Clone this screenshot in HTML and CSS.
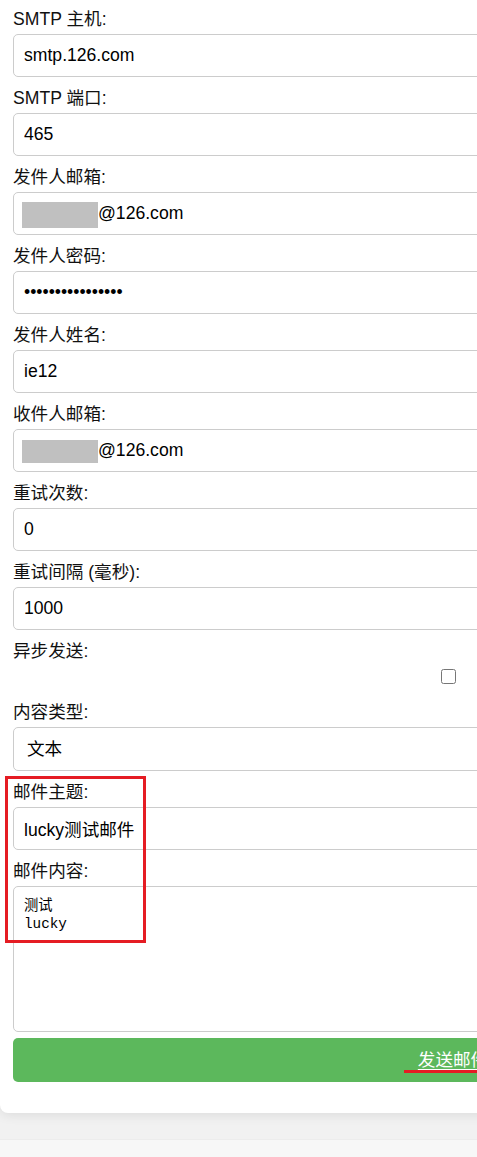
FILE: index.html
```html
<!DOCTYPE html>
<html lang="zh-CN">
<head>
<meta charset="utf-8">
<title>邮件发送</title>
<link rel="stylesheet" href="styles.css">
</head>
<body>
<div class="viewport">
  <div class="card">
    <form class="form">
      <div class="field">
        <label class="label">SMTP 主机:</label>
        <input class="input" type="text" value="smtp.126.com">
      </div>
      <div class="field">
        <label class="label">SMTP 端口:</label>
        <input class="input" type="text" value="465">
      </div>
      <div class="field">
        <label class="label">发件人邮箱:</label>
        <div class="redact-wrap">
          <input class="input input-redacted" type="text" value="@126.com">
          <span class="redact redact-a"></span>
        </div>
      </div>
      <div class="field">
        <label class="label">发件人密码:</label>
        <input class="input" type="password" value="abcdefghijklmnop">
      </div>
      <div class="field">
        <label class="label">发件人姓名:</label>
        <input class="input" type="text" value="ie12">
      </div>
      <div class="field">
        <label class="label">收件人邮箱:</label>
        <div class="redact-wrap">
          <input class="input input-redacted" type="text" value="@126.com">
          <span class="redact redact-b"></span>
        </div>
      </div>
      <div class="field">
        <label class="label">重试次数:</label>
        <input class="input" type="text" value="0">
      </div>
      <div class="field">
        <label class="label">重试间隔 (毫秒):</label>
        <input class="input" type="text" value="1000">
      </div>
      <div class="field">
        <label class="label">异步发送:</label>
        <div class="check-row"><input class="check" type="checkbox"></div>
      </div>
      <div class="field">
        <label class="label">内容类型:</label>
        <select class="input select">
          <option>文本</option>
        </select>
      </div>
      <div class="field">
        <label class="label">邮件主题:</label>
        <input class="input" type="text" value="lucky测试邮件">
      </div>
      <div class="field field-last">
        <label class="label">邮件内容:</label>
        <textarea class="textarea">测试
lucky</textarea>
      </div>
      <button class="button" type="button"><span class="button-text">发送邮件</span></button>
    </form>
  </div>
  <div class="footer"></div>
  <div class="annot-box"></div>
  <div class="annot-line"></div>
</div>
</body>
</html>
```

FILE: styles.css
```css
html, body {
  margin: 0;
  padding: 0;
}

body {
  background: #f1f1f1;
  font-family: "Liberation Sans", Arial, "Noto Sans CJK SC", sans-serif;
  color: #111;
}

.viewport {
  position: relative;
  width: 477px;
  height: 1157px;
  overflow: hidden;
}

.card {
  width: 910px;
  box-sizing: border-box;
  background: #fff;
  padding: 9px 13px 31px 13px;
  border-radius: 0 0 8px 8px;
  box-shadow: 0 2px 12px rgba(0, 0, 0, 0.09);
  margin-bottom: 26px;
}

.form {
  display: flex;
  flex-direction: column;
  width: 880px;
}

.field {
  display: flex;
  flex-direction: column;
  margin-bottom: 11px;
}

.field-last {
  margin-bottom: 6px;
}

.label {
  display: block;
  font-size: 17.6px;
  line-height: 20px;
  margin-bottom: 5px;
  color: #111;
}

.input {
  display: block;
  width: 100%;
  height: 43px;
  box-sizing: border-box;
  margin: 0;
  padding: 0 10px;
  border: 1px solid #cccccc;
  border-radius: 5px;
  background: #fff;
  font-family: "Liberation Sans", Arial, "Noto Sans CJK SC", sans-serif;
  font-size: 17.6px;
  color: #000;
  outline: none;
}

.select {
  height: 44px;
  padding: 0 10px 0 13px;
  appearance: none;
  -webkit-appearance: none;
  background: #fff;
  font-size: 17.6px;
}

.redact-wrap {
  position: relative;
}

.input-redacted {
  padding-left: 84px;
}

.redact {
  position: absolute;
  left: 9px;
  width: 76px;
  background: #c0c0c0;
}

.redact-a {
  top: 10px;
  height: 26px;
}

.redact-b {
  top: 11px;
  height: 23px;
}

.check-row {
  display: flex;
  justify-content: center;
  align-items: flex-start;
  width: 870px;
  height: 25px;
  padding-top: 3px;
  box-sizing: border-box;
}

.check {
  width: 15px;
  height: 15px;
  margin: 0;
}

.textarea {
  display: block;
  width: 100%;
  height: 146px;
  box-sizing: border-box;
  margin: 0;
  padding: 10px;
  border: 1px solid #cccccc;
  border-radius: 5px;
  font-family: "Liberation Mono", "Noto Sans CJK SC", monospace;
  font-size: 14.3px;
  line-height: 18px;
  color: #000;
  resize: none;
  outline: none;
}

.button {
  display: flex;
  align-items: center;
  justify-content: center;
  width: 100%;
  height: 44px;
  margin: 0;
  padding: 0;
  border: none;
  border-radius: 5px;
  background: #5cb85c;
  color: #fff;
  font-family: "Liberation Sans", Arial, "Noto Sans CJK SC", sans-serif;
  font-size: 17.6px;
  cursor: pointer;
}

.button-text {
  text-decoration: underline;
  text-underline-offset: 3px;
  line-height: 20px;
}

.footer {
  height: 40px;
  background: #f7f7f7;
  border-top: 1px solid #ececec;
}

.annot-box {
  position: absolute;
  left: 5px;
  top: 776px;
  width: 141px;
  height: 167px;
  box-sizing: border-box;
  border: 3px solid #e51c23;
}

.annot-line {
  position: absolute;
  left: 404px;
  top: 1070px;
  width: 80px;
  height: 3px;
  background: #e51c23;
}
```
